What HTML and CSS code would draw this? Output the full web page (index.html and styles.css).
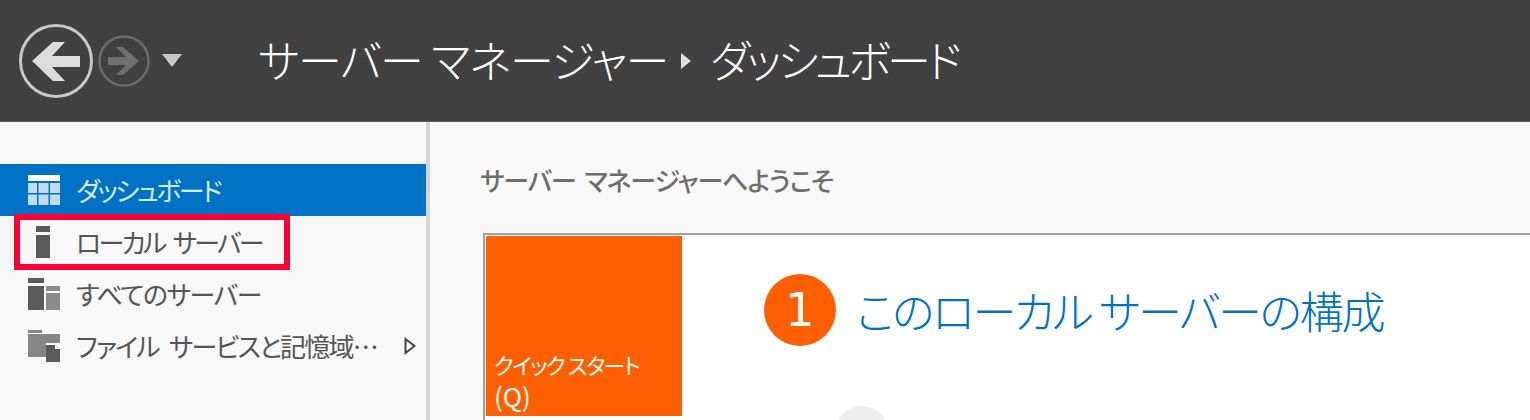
FILE: index.html
```html
<!DOCTYPE html>
<html lang="ja">
<head>
  <meta charset="UTF-8">
  <title>サーバー マネージャー</title>
  <link rel="stylesheet" href="styles.css">
</head>
<body>
  <header class="titleBar">
    <div class="navButtons">
      <svg class="backIcon" width="78" height="78" viewBox="0 0 78 78">
        <circle cx="39" cy="39" r="35.500" fill="none" stroke="#c8c8c8" stroke-width="3"/>
        <path d="M15 39L36 20h12L35 34h28v11H35l13 14H36z" fill="#dcdcdc"/>
      </svg>
      <svg class="forwardIcon" width="54" height="54" viewBox="0 0 54 54">
        <circle cx="27" cy="27" r="24.500" fill="none" stroke="#6b6b6b" stroke-width="2.500"/>
        <path d="M42 27L26 13h-7l10 10H11v8h18L19 41h7z" fill="#6f6f6f"/>
      </svg>
      <span class="dropArrow"></span>
    </div>
    <h1 class="breadcrumb">
      <span class="crumbRoot">サーバー マネージャー</span>
      <span class="crumbArrow"></span>
      <span class="crumbPage">ダッシュボード</span>
    </h1>
  </header>
  <div class="main">
    <nav class="sidebar">
      <ul class="navList">
        <li class="navItem is-active">
          <svg class="navIcon" width="32" height="30" viewBox="0 0 32 30">
            <rect x="0" y="0" width="32" height="6" fill="#fff"/>
            <path d="M0 8h9v10H0zM10.500 8h10v10h-10zM22 8h10v10H22zM0 19.500h9V30H0zM10.500 19.500h10V30h-10zM22 19.500h10V30H22z" fill="#bfdcf0"/>
          </svg>
          <span>ダッシュボード</span>
        </li>
        <li class="navItem is-marked">
          <svg class="navIcon" width="32" height="32" viewBox="0 0 32 32">
            <rect x="8" y="0" width="14" height="6" fill="#5a5a5a"/>
            <rect x="8" y="9" width="14" height="23" fill="#5a5a5a"/>
          </svg>
          <span>ローカル サーバー</span>
        </li>
        <li class="navItem">
          <svg class="navIcon" width="32" height="32" viewBox="0 0 32 32">
            <path d="M0 0h16v5H0zM0 8h16v24H0z" fill="#5a5a5a"/>
            <path d="M18 8h14v5H18zM18 15h14v17H18z" fill="#8a8a8a"/>
          </svg>
          <span>すべてのサーバー</span>
        </li>
        <li class="navItem is-files">
          <svg class="navIcon" width="32" height="32" viewBox="0 0 32 32">
            <path d="M0 0h14v3H0zM0 4h32v9H18v14H0z" fill="#858585"/>
            <path d="M18 15h10l4 4v13H18z" fill="#5a5a5a"/>
            <path d="M27 14l5 5h-5z" fill="#f8f8f8"/>
          </svg>
          <span>ファイル サービスと記憶域…</span>
          <svg class="expandIcon" width="12" height="18" viewBox="0 0 12 18">
            <path d="M1.500 2L10.500 9L1.500 16z" fill="none" stroke="#444" stroke-width="2"/>
          </svg>
        </li>
      </ul>
    </nav>
    <section class="content">
      <h2 class="welcome">サーバー マネージャーへようこそ</h2>
      <div class="startPanel">
        <div class="quickStart">クイック スタート<br><span class="quickKey">(Q)</span></div>
        <div class="stepArea">
          <div class="step">
            <span class="stepNumber">1</span>
            <span class="stepTitle">このローカル サーバーの構成</span>
          </div>
          <span class="nextStep"></span>
        </div>
      </div>
    </section>
  </div>
</body>
</html>
```

FILE: styles.css
```css
*, *::after {
  margin: 0;
  padding: 0;
  box-sizing: border-box;
}
html, body {
  height: 420px;
  overflow: hidden;
}
body {
  font-family: "Noto Sans CJK JP", "Noto Sans", sans-serif;
  font-feature-settings: "palt";
  background-color: #f8f8f8;
  color: #555;
}
.titleBar {
  display: flex;
  align-items: center;
  height: 122px;
  background-color: #414141;
  border-bottom: 1px solid #5c5c5c;
}
.navButtons {
  display: flex;
  align-items: center;
  flex: none;
  width: 258px;
  padding-left: 17px;
}
.navButtons svg {
  flex: none;
}
.forwardIcon {
  margin-left: 2px;
}
.dropArrow {
  width: 0;
  height: 0;
  margin-left: 11px;
  border-left: 10px solid transparent;
  border-right: 10px solid transparent;
  border-top: 13px solid #c8c8c8;
}
.breadcrumb {
  display: flex;
  align-items: center;
  padding-bottom: 3px;
  font-size: 44px;
  font-weight: 300;
  color: #fff;
  white-space: nowrap;
}
.crumbRoot {
  letter-spacing: -1.2px;
}
.crumbPage {
  letter-spacing: -3.6px;
}
.crumbArrow {
  width: 0;
  height: 0;
  margin: 3px 19px 0 13px;
  border-top: 8px solid transparent;
  border-bottom: 8px solid transparent;
  border-left: 10px solid #ddd;
}
.main {
  display: flex;
  height: 298px;
}
.sidebar {
  flex: none;
  width: 430px;
  padding-top: 42px;
  border-right: 4px solid #d6d6d6;
}
.navItem {
  display: flex;
  align-items: center;
  height: 52px;
  padding: 0 10px 0 28px;
  font-size: 26px;
  letter-spacing: -1.4px;
  white-space: nowrap;
  position: relative;
}
.navIcon, .expandIcon {
  flex: none;
}
.navItem > span {
  margin-left: 16px;
  padding-bottom: 2px;
}
.navItem.is-active {
  background-color: #0072c6;
  color: #d5ebfa;
  letter-spacing: -2.5px;
}
.navItem.is-marked {
  letter-spacing: -2.7px;
  word-spacing: 5px;
}
.navItem.is-files {
  letter-spacing: -1.8px;
  word-spacing: 6px;
}
.navItem.is-marked::after {
  content: "";
  position: absolute;
  top: -2px;
  left: 14px;
  width: 276px;
  height: 56px;
  border: 6px solid #ff0033;
}
.expandIcon {
  margin-left: auto;
}
.content {
  display: flex;
  flex-direction: column;
  flex: 1;
  padding: 38px 0 0 53px;
}
.welcome {
  margin-left: -3px;
  font-size: 26px;
  font-weight: 500;
  letter-spacing: -1.1px;
  word-spacing: 4px;
  color: #6e6e6e;
  line-height: 40px;
}
.startPanel {
  display: flex;
  flex: 1;
  margin-top: 33px;
  padding: 1px 0 0 1px;
  overflow: hidden;
  background-color: #fff;
  border-top: 2px solid #a0a0a0;
  border-left: 2px solid #a0a0a0;
}
.quickStart {
  flex: none;
  width: 196px;
  height: 180px;
  padding: 113px 0 0 8px;
  background-color: #ff5f00;
  color: #fff;
  font-size: 22px;
  letter-spacing: -1.5px;
  line-height: 31px;
}
.quickKey {
  font-size: 26px;
  letter-spacing: 0;
}
.stepArea {
  flex: 1;
  padding: 38px 0 0 82px;
  position: relative;
}
.step {
  display: flex;
  align-items: center;
}
.stepNumber {
  display: flex;
  align-items: center;
  justify-content: center;
  flex: none;
  width: 72px;
  height: 72px;
  border-radius: 50%;
  background-color: #ff5f00;
  color: #fff;
  font-family: "DejaVu Sans", sans-serif;
  font-size: 46px;
}
.stepTitle {
  margin-left: 20px;
  font-size: 44px;
  font-weight: 300;
  letter-spacing: -2.2px;
  color: #0072c6;
  white-space: nowrap;
}
.nextStep {
  position: absolute;
  top: 170px;
  left: 153px;
  width: 54px;
  height: 54px;
  border-radius: 50%;
  background-color: #eee;
}
```
